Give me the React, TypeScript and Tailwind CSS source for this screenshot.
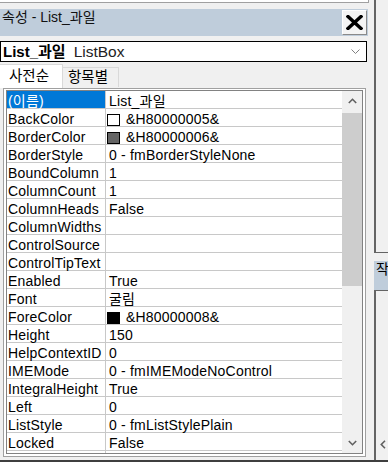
import React from "react";

type Row = { k: string; v: string; sw?: string; sel?: boolean };

const rows: Row[] = [
  { k: "(이름)", v: "List_과일", sel: true },
  { k: "BackColor", v: "&H80000005&", sw: "#ffffff" },
  { k: "BorderColor", v: "&H80000006&", sw: "#646464" },
  { k: "BorderStyle", v: "0 - fmBorderStyleNone" },
  { k: "BoundColumn", v: "1" },
  { k: "ColumnCount", v: "1" },
  { k: "ColumnHeads", v: "False" },
  { k: "ColumnWidths", v: "" },
  { k: "ControlSource", v: "" },
  { k: "ControlTipText", v: "" },
  { k: "Enabled", v: "True" },
  { k: "Font", v: "굴림" },
  { k: "ForeColor", v: "&H80000008&", sw: "#000000" },
  { k: "Height", v: "150" },
  { k: "HelpContextID", v: "0" },
  { k: "IMEMode", v: "0 - fmIMEModeNoControl" },
  { k: "IntegralHeight", v: "True" },
  { k: "Left", v: "0" },
  { k: "ListStyle", v: "0 - fmListStylePlain" },
  { k: "Locked", v: "False" },
  { k: "", v: "" },
];

const FONT = { fontFamily: '"Liberation Sans", "Noto Sans CJK KR", sans-serif' };

export default function App() {
  return (
    <div
      className="w-[388px] h-[462px] bg-[#f0f0f0] flex flex-col overflow-hidden text-black"
      style={FONT}
    >
      <div className="flex h-[460px]">
        {/* left panel */}
        <div className="w-[369px] flex flex-col shrink-0">
          <div className="h-[3px] w-[369px] bg-white border-b border-r border-[#a0a0a0]" />
          <div className="mt-[6px] h-[27px] w-[368px] bg-[#bfcddb] flex justify-between">
            <div className="pl-[2px] pt-[1px] text-[14px] leading-[14px] text-[#111]">속성 - List_과일</div>
            <div className="mt-[1px] mr-[1px] w-[25px] h-[25px] bg-[#f4f4f4] border border-t-white border-l-white border-r-[#8a8a8a] border-b-[#8a8a8a] flex items-center justify-center">
              <svg width="17" height="15" viewBox="0 0 17 15">
                <path d="M2 1.5 L15 13.5 M15 1.5 L2 13.5" stroke="#000" strokeWidth="3.4" strokeLinecap="square" />
              </svg>
            </div>
          </div>
          <div className="mt-[5px] h-[21px] w-[367px] border border-black bg-white flex items-center pl-[2px] pr-[6px]">
            <span className="font-bold text-[15px] leading-[19px]">List_과일</span>
            <span className="ml-[8px] text-[15.5px] leading-[19px] text-[#222]">ListBox</span>
            <div className="flex-1" />
            <svg width="9" height="5" viewBox="0 0 9 5">
              <polyline points="0.5,0.5 4.5,4.5 8.5,0.5" fill="none" stroke="#808080" strokeWidth="1" />
            </svg>
          </div>
          {/* tabs */}
          <div className="h-[26px] flex items-start">
            <div className="mt-[2px] h-[24px] w-[63px] bg-white border-t border-r border-[#d9d9d9] pl-[9px] text-[14.5px] leading-[22px]">
              사전순
            </div>
            <div className="mt-[5px] h-[20px] w-[56px] bg-[#f0f0f0] border-t border-r border-[#d9d9d9] pl-[5px] text-[14.5px] leading-[19px]">
              항목별
            </div>
          </div>
          {/* grid */}
          <div className="ml-[3px] w-[363px] h-[369px] border border-[#a0a0a0] bg-white pt-[1px] px-[2px] pb-[2px]">
            <div className="h-full border border-[#828282] flex overflow-hidden">
              <div className="w-[335px] h-full overflow-hidden shrink-0">
                {rows.map((r, i) => (
                  <div key={i} className="flex h-[18px] border-b border-[#c8c8c8] text-[14px] tracking-[0.2px]">
                    <div
                      className={
                        r.sel
                          ? "w-[99px] shrink-0 border-r border-[#c8c8c8] pl-[1px] pt-[1px] leading-[18px] overflow-x-clip whitespace-nowrap bg-[#0078d7] text-white"
                          : "w-[99px] shrink-0 border-r border-[#c8c8c8] pl-[1px] pt-[1px] leading-[18px] overflow-x-clip whitespace-nowrap"
                      }
                    >
                      {r.k}
                    </div>
                    <div className="flex-1 flex items-start overflow-x-clip whitespace-nowrap pt-[1px] leading-[18px]">
                      {r.sw ? (
                        <>
                          <div
                            className="ml-[1px] mt-[4px] w-[13px] h-[12px] border border-black shrink-0"
                            style={{ backgroundColor: r.sw }}
                          />
                          <span className="ml-[6px]">{r.v}</span>
                        </>
                      ) : (
                        <span className="pl-[3px]">{r.v}</span>
                      )}
                    </div>
                  </div>
                ))}
              </div>
              <div className="w-[20px] h-full bg-[#f0f0f0] flex flex-col">
                <div className="h-[20px] flex items-center justify-center">
                  <svg width="9" height="6" viewBox="0 0 9 6">
                    <polyline points="0.8,5 4.5,1.3 8.2,5" fill="none" stroke="#606060" strokeWidth="1.6" />
                  </svg>
                </div>
                <div className="mt-[2px] h-[173px] bg-[#cdcdcd]" />
                <div className="flex-1" />
                <div className="h-[20px] flex items-center justify-center">
                  <svg width="9" height="6" viewBox="0 0 9 6">
                    <polyline points="0.8,1 4.5,4.7 8.2,1" fill="none" stroke="#606060" strokeWidth="1.6" />
                  </svg>
                </div>
              </div>
            </div>
          </div>
        </div>
        {/* right strip */}
        <div className="flex-1 pl-[5px] flex flex-col overflow-hidden">
          <div className="h-[253px] border-l-2 border-b border-[#646464]" />
          <div className="mt-[8px] h-[29px] bg-[#bfcddb] pl-[2px] text-[14px] leading-[16px] overflow-hidden whitespace-nowrap">
            작업
          </div>
          <div className="flex-1 border-l-2 border-t border-[#646464] flex flex-col justify-end pb-[11px] pl-[4px]">
            <svg width="6" height="9" viewBox="0 0 6 9">
              <polyline points="5,0.8 1.3,4.5 5,8.2" fill="none" stroke="#606060" strokeWidth="1.6" />
            </svg>
          </div>
        </div>
      </div>
      <div className="h-[2px] bg-[#3f3f3f]" />
    </div>
  );
}
